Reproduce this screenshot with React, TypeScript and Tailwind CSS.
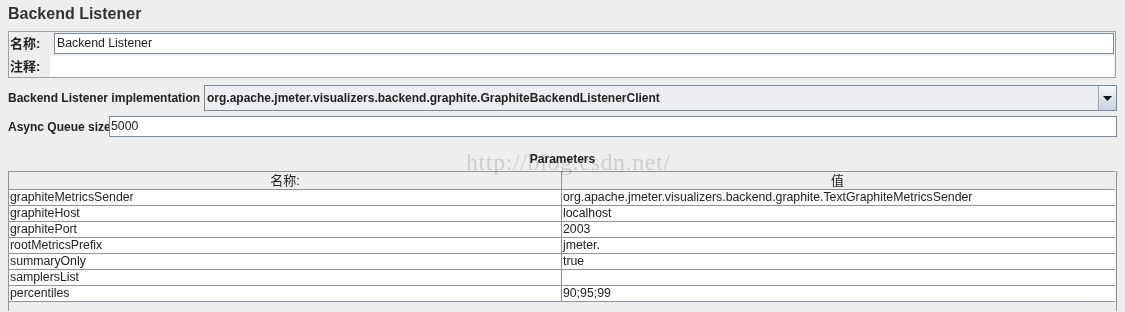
const rows: [string, string][] = [
  ['graphiteMetricsSender', 'org.apache.jmeter.visualizers.backend.graphite.TextGraphiteMetricsSender'],
  ['graphiteHost', 'localhost'],
  ['graphitePort', '2003'],
  ['rootMetricsPrefix', 'jmeter.'],
  ['summaryOnly', 'true'],
  ['samplersList', ''],
  ['percentiles', '90;95;99'],
];

const cjk = "font-['Liberation_Sans','Noto_Sans_CJK_SC',sans-serif]";

export default function App() {
  return (
    <div className={`relative w-[1125px] h-[312px] overflow-hidden bg-[#eeeeee] text-[12.3px] text-[#222] whitespace-nowrap ${cjk}`}>
      <div className="pl-2 pt-[4px] h-[31px] text-[16px] leading-[20px] font-bold text-[#333]">Backend Listener</div>

      <div className="mx-2 w-[1108px] h-[47px] border border-[#a0a0a0] flex flex-col">
        <div className="flex items-center h-[24px] pl-[1px] pr-[1px]">
          <span className="w-[44px] shrink-0 font-bold text-[13px]">名称:</span>
          <div className="flex-1 h-[21px] mb-[1px] bg-white border border-[#7a8a99] pl-[2px] flex items-center">Backend Listener</div>
        </div>
        <div className="flex items-center flex-1 pl-[1px] pr-[1px]">
          <span className="w-[40px] shrink-0 font-bold text-[13px]">注释:</span>
          <div className="flex-1 h-full bg-white"></div>
        </div>
      </div>

      <div className="flex items-center h-[26px] mt-[7px] pl-2 pr-2">
        <span className="w-[196px] shrink-0 font-bold text-[12px]">Backend Listener implementation</span>
        <div className="flex-1 h-[26px] flex border border-[#7a8a99] bg-[#eceef1]">
          <div className="flex-1 flex items-center pl-[2px] font-bold text-[12px]">org.apache.jmeter.visualizers.backend.graphite.GraphiteBackendListenerClient</div>
          <div className="w-[18px] border-l border-[#9aa6b2] bg-gradient-to-b from-[#f4f7fa] to-[#c7d4e0] flex items-center justify-center">
            <svg width="9" height="5" viewBox="0 0 9 5"><path d="M0 0h9L4.5 5z" fill="#111" /></svg>
          </div>
        </div>
      </div>

      <div className="flex items-center h-[21px] mt-[5px] pl-2 pr-2">
        <span className="w-[101px] shrink-0 font-bold text-[12px]">Async Queue size</span>
        <div className="flex-1 h-[21px] bg-white border border-[#7a8a99] pl-[1px] flex items-center">5000</div>
      </div>

      <div className="mt-[13px] h-[21px] text-center font-bold text-[12px] text-[#222]">Parameters</div>

      <div className="mx-2 w-[1109px] border-l border-r border-[#8a949e] h-[140px]">
        <div className="flex h-[19px] border-t border-b border-[#8a949e] bg-[#eeeeee] mr-[1px]">
          <div className="w-[553px] border-r border-[#8a949e] text-center text-[13px] leading-[17px]">名称:</div>
          <div className="flex-1 text-center text-[13px] leading-[17px] pr-[2px]">值</div>
        </div>
        {rows.map(([k, v]) => (
          <div key={k} className="flex h-[16px] border-b border-[#8a949e] bg-white mr-[1px]">
            <div className="w-[553px] border-r border-[#8a949e] pl-[1px] leading-[15px]">{k}</div>
            <div className="flex-1 pl-[1px] leading-[15px]">{v}</div>
          </div>
        ))}
      </div>

      <div className="absolute left-[466px] top-[148px] text-[24px] leading-[28px] text-[#dedede] mix-blend-multiply font-['Liberation_Serif',serif] tracking-[0.6px] pointer-events-none">http://blog.csdn.net/</div>
    </div>
  );
}
